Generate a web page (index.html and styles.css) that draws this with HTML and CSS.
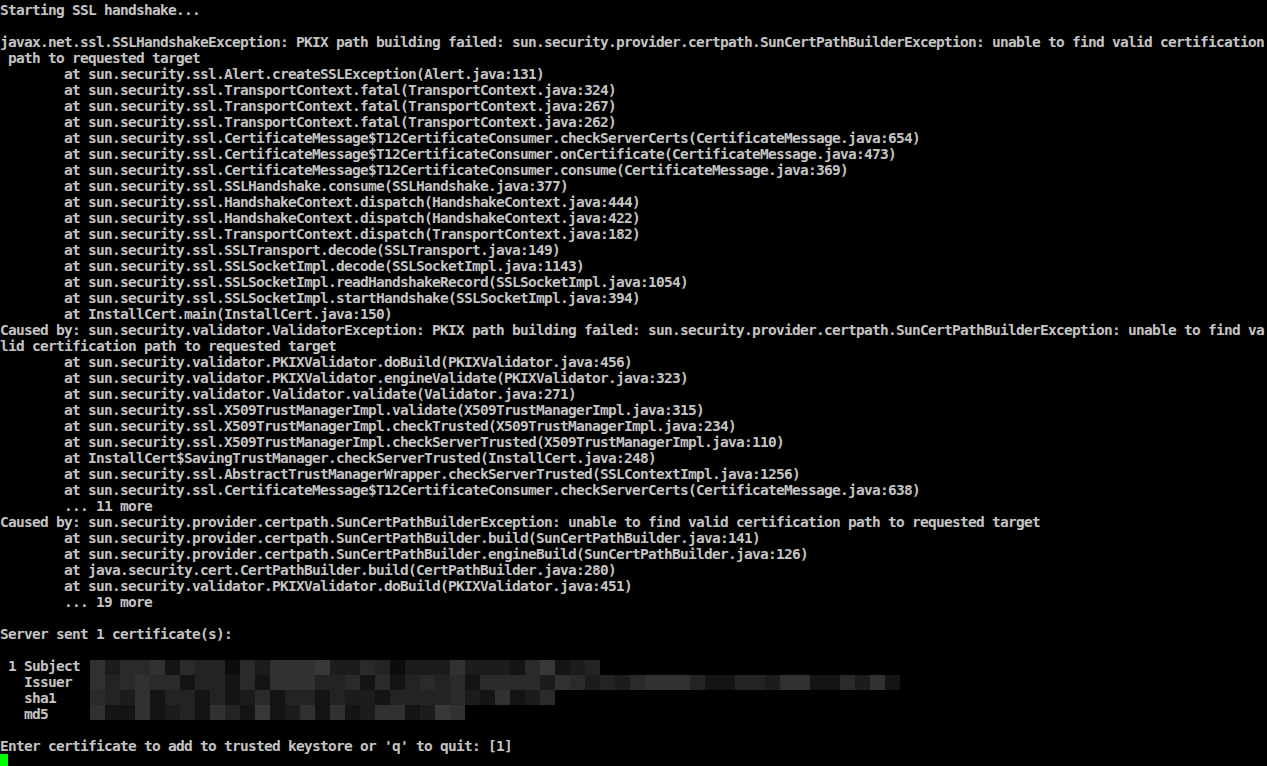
FILE: index.html
```html
<!DOCTYPE html>
<html lang="en">
  <head>
    <meta charset="UTF-8" />
    <title>InstallCert</title>
    <link rel="stylesheet" href="styles.css">
  </head>
  <body>
    <div class="screen">
<pre class="term">Starting SSL handshake...

javax.net.ssl.SSLHandshakeException: PKIX path building failed: sun.security.provider.certpath.SunCertPathBuilderException: unable to find valid certification
 path to requested target
        at sun.security.ssl.Alert.createSSLException(Alert.java:131)
        at sun.security.ssl.TransportContext.fatal(TransportContext.java:324)
        at sun.security.ssl.TransportContext.fatal(TransportContext.java:267)
        at sun.security.ssl.TransportContext.fatal(TransportContext.java:262)
        at sun.security.ssl.CertificateMessage$T12CertificateConsumer.checkServerCerts(CertificateMessage.java:654)
        at sun.security.ssl.CertificateMessage$T12CertificateConsumer.onCertificate(CertificateMessage.java:473)
        at sun.security.ssl.CertificateMessage$T12CertificateConsumer.consume(CertificateMessage.java:369)
        at sun.security.ssl.SSLHandshake.consume(SSLHandshake.java:377)
        at sun.security.ssl.HandshakeContext.dispatch(HandshakeContext.java:444)
        at sun.security.ssl.HandshakeContext.dispatch(HandshakeContext.java:422)
        at sun.security.ssl.TransportContext.dispatch(TransportContext.java:182)
        at sun.security.ssl.SSLTransport.decode(SSLTransport.java:149)
        at sun.security.ssl.SSLSocketImpl.decode(SSLSocketImpl.java:1143)
        at sun.security.ssl.SSLSocketImpl.readHandshakeRecord(SSLSocketImpl.java:1054)
        at sun.security.ssl.SSLSocketImpl.startHandshake(SSLSocketImpl.java:394)
        at InstallCert.main(InstallCert.java:150)
Caused by: sun.security.validator.ValidatorException: PKIX path building failed: sun.security.provider.certpath.SunCertPathBuilderException: unable to find va
lid certification path to requested target
        at sun.security.validator.PKIXValidator.doBuild(PKIXValidator.java:456)
        at sun.security.validator.PKIXValidator.engineValidate(PKIXValidator.java:323)
        at sun.security.validator.Validator.validate(Validator.java:271)
        at sun.security.ssl.X509TrustManagerImpl.validate(X509TrustManagerImpl.java:315)
        at sun.security.ssl.X509TrustManagerImpl.checkTrusted(X509TrustManagerImpl.java:234)
        at sun.security.ssl.X509TrustManagerImpl.checkServerTrusted(X509TrustManagerImpl.java:110)
        at InstallCert$SavingTrustManager.checkServerTrusted(InstallCert.java:248)
        at sun.security.ssl.AbstractTrustManagerWrapper.checkServerTrusted(SSLContextImpl.java:1256)
        at sun.security.ssl.CertificateMessage$T12CertificateConsumer.checkServerCerts(CertificateMessage.java:638)
        ... 11 more
Caused by: sun.security.provider.certpath.SunCertPathBuilderException: unable to find valid certification path to requested target
        at sun.security.provider.certpath.SunCertPathBuilder.build(SunCertPathBuilder.java:141)
        at sun.security.provider.certpath.SunCertPathBuilder.engineBuild(SunCertPathBuilder.java:126)
        at java.security.cert.CertPathBuilder.build(CertPathBuilder.java:280)
        at sun.security.validator.PKIXValidator.doBuild(PKIXValidator.java:451)
        ... 19 more

Server sent 1 certificate(s):

 1 Subject
   Issuer
   sha1
   md5

Enter certificate to add to trusted keystore or 'q' to quit: [1]</pre>
      <div class="cursor"></div>

      <!-- redacted certificate details -->
      <div class="blur">
        <div class="blur-row"><i class="g5"></i><i class="g2"></i><i class="g4"></i><i class="g4"></i><i class="g5"></i><i class="g1"></i><i class="g4"></i><i class="g3"></i><i class="g3"></i><i class="g0"></i><i class="g4"></i><i class="g2"></i><i class="g5"></i><i class="g5"></i><i class="g5"></i><i class="g6"></i><i class="g2"></i><i class="g2"></i><i class="g4"></i><i class="g3"></i><i class="g0"></i><i class="g2"></i><i class="g2"></i><i class="g2"></i><i class="g5"></i><i class="g2"></i><i class="g2"></i><i class="g2"></i><i class="g1"></i><i class="g4"></i><i class="g6"></i><i class="g1"></i><i class="g2"></i><i class="g3"></i></div>
        <div class="blur-row"><i class="g5"></i><i class="g3"></i><i class="g4"></i><i class="g5"></i><i class="g4"></i><i class="g4"></i><i class="g1"></i><i class="g3"></i><i class="g3"></i><i class="g1"></i><i class="g4"></i><i class="g1"></i><i class="g5"></i><i class="g5"></i><i class="g5"></i><i class="g3"></i><i class="g3"></i><i class="g4"></i><i class="g1"></i><i class="g4"></i><i class="g1"></i><i class="g3"></i><i class="g4"></i><i class="g3"></i><i class="g4"></i><i class="g1"></i><i class="g4"></i><i class="g4"></i><i class="g4"></i><i class="g4"></i><i class="g2"></i><i class="g5"></i><i class="g4"></i><i class="g2"></i><i class="g3"></i><i class="g2"></i><i class="g4"></i><i class="g5"></i><i class="g5"></i><i class="g5"></i><i class="g3"></i><i class="g1"></i><i class="g1"></i><i class="g3"></i><i class="g3"></i><i class="g2"></i><i class="g5"></i><i class="g5"></i><i class="g1"></i><i class="g1"></i><i class="g4"></i><i class="g2"></i><i class="g5"></i><i class="g1"></i></div>
        <div class="blur-row"><i class="g4"></i><i class="g3"></i><i class="g2"></i><i class="g5"></i><i class="g1"></i><i class="g3"></i><i class="g3"></i><i class="g1"></i><i class="g3"></i><i class="g1"></i><i class="g2"></i><i class="g4"></i><i class="g1"></i><i class="g3"></i><i class="g3"></i><i class="g1"></i><i class="g3"></i><i class="g2"></i><i class="g2"></i><i class="g1"></i><i class="g3"></i><i class="g3"></i><i class="g3"></i><i class="g3"></i><i class="g4"></i><i class="g2"></i><i class="g1"></i><i class="g5"></i><i class="g1"></i><i class="g2"></i><i class="g4"></i></div>
        <div class="blur-row"><i class="g5"></i><i class="g1"></i><i class="g1"></i><i class="g5"></i><i class="g1"></i><i class="g2"></i><i class="g3"></i><i class="g1"></i><i class="g5"></i><i class="g3"></i><i class="g1"></i><i class="g6"></i><i class="g1"></i><i class="g2"></i><i class="g5"></i><i class="g1"></i><i class="g5"></i><i class="g1"></i><i class="g2"></i><i class="g5"></i><i class="g5"></i><i class="g1"></i><i class="g2"></i><i class="g6"></i><i class="g5"></i></div>
      </div>
    </div>
  </body>
</html>
```

FILE: styles.css
```css
html,
body {
  margin: 0;
  padding: 0;
  background-color: #000;
  overflow: hidden;
}
.screen {
  position: relative;
  width: 1267px;
  height: 766px;
  overflow: hidden;
}
.term {
  margin: 0;
  padding: 2px 0 0 0;
  font-family: "DejaVu Sans Mono", monospace;
  font-size: 14.5px;
  font-weight: bold;
  letter-spacing: -0.73px;
  line-height: 16px;
  color: #c4c4c4;
  white-space: pre;
}
.cursor {
  width: 8px;
  height: 12px;
  background-color: #00ff00;
}
.blur {
  position: absolute;
  left: 90px;
  top: 660px;
}
.blur-row {
  display: flex;
}
.blur-row i {
  display: block;
  width: 15px;
  height: 15px;
}
.g0 { background-color: #0c0c0c; }
.g1 { background-color: #141414; }
.g2 { background-color: #1c1c1c; }
.g3 { background-color: #232323; }
.g4 { background-color: #2a2a2a; }
.g5 { background-color: #313131; }
.g6 { background-color: #383838; }
```
